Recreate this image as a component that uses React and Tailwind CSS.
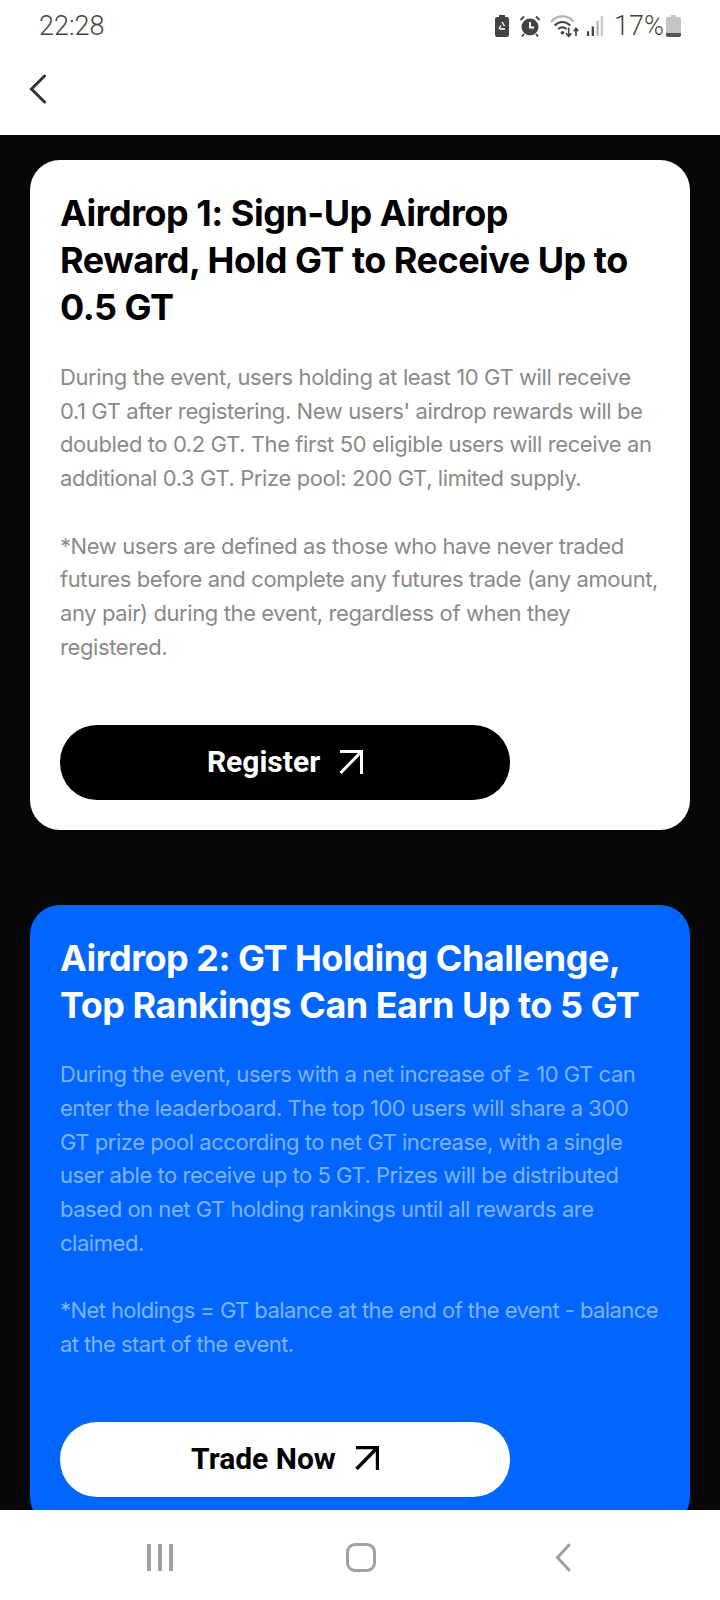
const inter = { fontFamily: '"Inter", "Liberation Sans", sans-serif' };

function Arrow({ color, weight }) {
  return (
    <svg width="24" height="24" viewBox="0 0 24 24" fill="none" stroke={color} strokeWidth={weight}>
      <path d="M1 1.500H22.500V24" />
      <path d="M22 2L1.500 23" />
    </svg>
  );
}

function ActionButton({ label, dark }) {
  return (
    <div className={`flex h-[75px] w-[450px] items-center justify-center gap-[19px] rounded-[37px] pb-[2px] font-['Roboto',sans-serif] text-[30px] font-bold ${dark ? "bg-black text-white" : "bg-white text-black"}`}>
      <span>{label}</span>
      <Arrow color={dark ? "#ffffff" : "#000000"} weight={dark ? 3 : 3.4} />
    </div>
  );
}

function Lines({ items }) {
  return items.map((line) => (
    <span key={line} className="block whitespace-nowrap">{line}</span>
  ));
}

function StatusIcons() {
  return (
    <div className="flex items-center">
      <svg width="14" height="22" viewBox="0 0 14 22" fill="#444444" className="mr-[10px]">
        <path d="M4 0h6v2h2a2 2 0 0 1 2 2v16a2 2 0 0 1-2 2H2a2 2 0 0 1-2-2V4a2 2 0 0 1 2-2h2z" />
        <path d="M7 7l2.500 4M4 14l2-3.500M10 14H5" stroke="#ffffff" strokeWidth="1.400" fill="none" />
      </svg>
      <svg width="22" height="22" viewBox="0 0 22 22" className="mr-[8px]">
        <circle cx="11" cy="12" r="8.500" fill="#444444" />
        <path d="M11 7v5.500h4" stroke="#ffffff" strokeWidth="1.800" fill="none" />
        <path d="M1.500 5L5 1.500M20.500 5L17 1.500M5 19l-2 2.500M17 19l2 2.500" stroke="#444444" strokeWidth="1.800" fill="none" />
      </svg>
      <svg width="31" height="24" viewBox="0 0 28 23" fill="none" className="mr-[6px]">
        <path d="M1 7.500C7 .5 17 .5 23 7.500" stroke="#b5b5b5" strokeWidth="2" />
        <path d="M4.500 11c4.500-4.500 10.500-4.500 15 0" stroke="#444444" strokeWidth="2" />
        <path d="M8 14.500c2.500-2.500 5.500-2.500 8 0" stroke="#444444" strokeWidth="2" />
        <circle cx="12" cy="18" r="1.700" fill="#444444" />
        <path d="M18 13v8M15.500 18.500l2.500 3 2.500-3M25 21v-7M22.800 16.500l2.200-2.800 2.200 2.800" stroke="#444444" strokeWidth="1.600" />
      </svg>
      <svg width="18" height="20" viewBox="0 0 17 21" className="mr-[10px]">
        <rect x="0" y="16" width="2.400" height="5" fill="#444444" />
        <rect x="5" y="11" width="2.400" height="10" fill="#444444" />
        <rect x="10" y="5" width="2.400" height="16" fill="#b5b5b5" />
        <rect x="14.500" y="0" width="2.400" height="21" fill="#c8c8c8" />
      </svg>
      <span className="font-['Roboto',sans-serif] text-[27px] font-light leading-none text-[#444444]">17%</span>
      <svg width="15" height="22" viewBox="0 0 15 22" className="ml-[2px]">
        <path d="M5 0h5v2h3a2 2 0 0 1 2 2v16a2 2 0 0 1-2 2H2a2 2 0 0 1-2-2V4a2 2 0 0 1 2-2h3z" fill="#c4c4c4" />
        <path d="M0 18h15v2a2 2 0 0 1-2 2H2a2 2 0 0 1-2-2z" fill="#555555" />
      </svg>
    </div>
  );
}

export default function App() {
  return (
    <div className="flex h-[1600px] w-[720px] flex-col overflow-hidden bg-[#070707]" style={inter}>
      <header className="h-[135px] shrink-0 bg-white">
        <div className="flex h-[52px] items-center justify-between pl-[39px] pr-[39px]">
          <span className="font-['Roboto',sans-serif] text-[27px] font-light text-[#444444]">22:28</span>
          <StatusIcons />
        </div>
        <div className="pl-[29px] pt-[22px]">
          <svg width="18" height="30" viewBox="0 0 18 30" fill="none" stroke="#333333" strokeWidth="3" strokeLinecap="round">
            <path d="M15.500 2L2.500 15L15.500 28" />
          </svg>
        </div>
      </header>

      <main className="flex min-h-0 flex-1 flex-col gap-[75px] overflow-hidden px-[30px] pt-[25px]">
        <section className="shrink-0 rounded-[30px] bg-white px-[30px] pb-[30px] pt-[30px]">
          <h2 className="text-[36px] font-bold leading-[47px] tracking-[-0.5px] text-black">
            <Lines items={["Airdrop 1: Sign-Up Airdrop", "Reward, Hold GT to Receive Up to", "0.5 GT"]} />
          </h2>
          <div className="mt-[30px] text-[22px] leading-[33.7px] tracking-[-0.4px] text-[#8a8a8a]">
            <p>
              <Lines items={[
                "During the event, users holding at least 10 GT will receive",
                "0.1 GT after registering. New users' airdrop rewards will be",
                "doubled to 0.2 GT. The first 50 eligible users will receive an",
                "additional 0.3 GT. Prize pool: 200 GT, limited supply.",
              ]} />
            </p>
            <p className="mt-[33.7px]">
              <Lines items={[
                "*New users are defined as those who have never traded",
                "futures before and complete any futures trade (any amount,",
                "any pair) during the event, regardless of when they",
                "registered.",
              ]} />
            </p>
          </div>
          <div className="mt-[61px]">
            <ActionButton label="Register" dark />
          </div>
        </section>

        <section className="shrink-0 rounded-[30px] bg-[#0066ff] px-[30px] pb-[30px] pt-[30px]">
          <h2 className="text-[36px] font-bold leading-[47px] tracking-[-0.5px] text-white">
            <Lines items={["Airdrop 2: GT Holding Challenge,", "Top Rankings Can Earn Up to 5 GT"]} />
          </h2>
          <div className="mt-[29px] text-[22px] leading-[33.7px] tracking-[-0.46px] text-[#80b3ff]">
            <p>
              <Lines items={[
                "During the event, users with a net increase of ≥ 10 GT can",
                "enter the leaderboard. The top 100 users will share a 300",
                "GT prize pool according to net GT increase, with a single",
                "user able to receive up to 5 GT. Prizes will be distributed",
                "based on net GT holding rankings until all rewards are",
                "claimed.",
              ]} />
            </p>
            <p className="mt-[33.7px] tracking-[-0.58px]">
              <Lines items={[
                "*Net holdings = GT balance at the end of the event - balance",
                "at the start of the event.",
              ]} />
            </p>
          </div>
          <div className="mt-[60px]">
            <ActionButton label="Trade Now" />
          </div>
        </section>
      </main>

      <nav className="flex h-[90px] shrink-0 items-center justify-center gap-[173px] bg-white pr-[2px] pt-[5px]">
        <div className="flex gap-[7px]">
          <span className="h-[27px] w-[4px] bg-[#a0a0a0]" />
          <span className="h-[27px] w-[4px] bg-[#a0a0a0]" />
          <span className="h-[27px] w-[4px] bg-[#a0a0a0]" />
        </div>
        <span className="mr-[6px] h-[29px] w-[30px] rounded-[9px] border-[3px] border-[#a0a0a0]" />
        <svg width="16" height="29" viewBox="0 0 16 29" fill="none" stroke="#a0a0a0" strokeWidth="3" strokeLinecap="round">
          <path d="M14 2L2.500 14.500L14 27" />
        </svg>
      </nav>
    </div>
  );
}
